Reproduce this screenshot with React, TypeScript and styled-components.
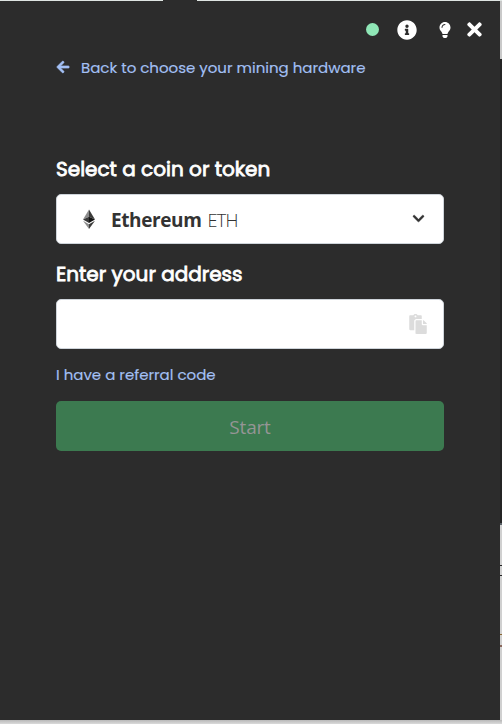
import React from "react";
import styled, { createGlobalStyle } from "styled-components";
import {
  FaArrowLeft,
  FaInfoCircle,
  FaLightbulb,
  FaTimes,
  FaChevronDown,
  FaPaste,
} from "react-icons/fa";

const GlobalStyle = createGlobalStyle`
  * { box-sizing: border-box; }
  body { margin: 0; overflow: hidden; background: #d4d4d4; }
`;

const Desktop = styled.div`
  display: grid;
  grid-template-columns: 500px 2px;
  grid-template-rows: 1px 719px 4px;
  width: 502px;
  height: 724px;
  overflow: hidden;
`;

const TopEdge = styled.div`
  grid-column: 1 / 3;
  background: linear-gradient(90deg, #dfe5e2 163px, #2c2c2c 163px 197px, #dfe5e2 197px);
`;

const SideEdge = styled.div`
  display: flex;
  flex-direction: column;
`;

const Strip = styled.div<{ $h: number; $color: string }>`
  flex: none;
  height: ${(p) => p.$h}px;
  background: ${(p) => p.$color};
`;

const BottomEdge = styled.div`
  grid-column: 1 / 3;
  background: linear-gradient(#b8b8b8, #dadada);
`;

const Window = styled.main`
  display: flex;
  flex-direction: column;
  padding: 0 56px;
  background: #2c2c2c;
  color: #fff;
  font-family: Poppins, Inter, sans-serif;
`;

const Toolbar = styled.header`
  display: flex;
  justify-content: flex-end;
  align-items: center;
  height: 56px;
  padding-top: 1px;
  margin-right: -38px;
`;

const StatusDot = styled.span`
  width: 13px;
  height: 13px;
  border-radius: 50%;
  background: #8fe6b6;
  margin-right: 18px;
`;

const ToolButton = styled.button<{ $size: number; $w: number; $gap: number }>`
  display: flex;
  justify-content: center;
  width: ${(p) => p.$w}px;
  margin: 0 ${(p) => p.$gap}px 0 0;
  padding: 0;
  border: 0;
  background: none;
  color: #fff;
  font-size: ${(p) => p.$size}px;
  svg { flex: none; }
`;

const TextLink = styled.a`
  display: flex;
  align-items: center;
  align-self: flex-start;
  height: 20px;
  gap: 11px;
  color: #a3c0f5;
  font-size: 15px;
  -webkit-text-stroke: 0.15px #a3c0f5;
  white-space: nowrap;
  svg { stroke: currentColor; stroke-width: 22px; overflow: visible; }
`;

const Form = styled.form`
  display: flex;
  flex-direction: column;
  margin-top: 79px;
`;

const Label = styled.label`
  height: 38px;
  font-size: 20px;
  font-weight: 400;
  -webkit-text-stroke: 0.8px #fff;
  line-height: 26px;
  white-space: nowrap;
`;

const Field = styled.div`
  display: flex;
  align-items: center;
  height: 50px;
  margin-bottom: 17px;
  padding: 0 15px 0 26px;
  border: 1px solid #ced4da;
  border-radius: 5px;
  background: #fff;
  color: #333;
  font: 19px "Segoe UI", "Open Sans", sans-serif;
`;

const CoinName = styled.strong`
  margin: 2px 0 0 16px;
  font-weight: 700;
  letter-spacing: -0.4px;
`;

const Ticker = styled.span`
  margin: 2px 0 0 6px;
  font-size: 18px;
  font-weight: 300;
  letter-spacing: -0.6px;
`;

const Trailing = styled.span<{ $size: number; $color: string; $right: number }>`
  display: flex;
  margin: 0 ${(p) => p.$right}px 0 auto;
  color: ${(p) => p.$color};
  font-size: ${(p) => p.$size}px;
`;

const CaretIcon = styled(FaChevronDown)`
  margin-bottom: 2px;
  stroke: currentColor;
  stroke-width: 16px;
`;

const ReferralLink = styled(TextLink)`
  margin-top: -2px;
`;

const Start = styled.button`
  height: 50px;
  margin-top: 17px;
  padding: 2px 0 0;
  border: 0;
  border-radius: 5px;
  background: #3c7a50;
  color: #959595;
  font: 19px "Segoe UI", "Open Sans", sans-serif;
  letter-spacing: -0.2px;
`;

const EthereumLogo = () => (
  <svg width="12" height="20" viewBox="0 0 12 20">
    <path d="M6 0.6 0 10.5l6-2.8z" fill="#8c8c8c" />
    <path d="M6 0.6v7.1l6 2.8z" fill="#3c3c3b" />
    <path d="M0 10.5l6-2.8v6.3z" fill="#383838" />
    <path d="M12 10.5 6 7.7V14z" fill="#141414" />
    <path d="M0 11.8 6 20v-4.7z" fill="#8c8c8c" />
    <path d="M12 11.8 6 20v-4.7z" fill="#3c3c3b" />
  </svg>
);

export default function App() {
  return (
    <>
      <GlobalStyle />
      <Desktop>
        <TopEdge />
        <Window>
          <Toolbar>
            <StatusDot />
            <ToolButton $size={20} $w={20} $gap={22} aria-label="Info"><FaInfoCircle /></ToolButton>
            <ToolButton $size={16} $w={11} $gap={17} aria-label="Tips"><FaLightbulb /></ToolButton>
            <ToolButton $size={21} $w={15} $gap={0} aria-label="Close"><FaTimes /></ToolButton>
          </Toolbar>
          <TextLink>
            <FaArrowLeft size={14} />
            <span>Back to choose your mining hardware</span>
          </TextLink>
          <Form>
            <Label>Select a coin or token</Label>
            <Field>
              <EthereumLogo />
              <CoinName>Ethereum</CoinName>
              <Ticker>ETH</Ticker>
              <Trailing $size={13} $color="#333" $right={3}><CaretIcon /></Trailing>
            </Field>
            <Label>Enter your address</Label>
            <Field>
              <Trailing $size={20} $color="#dcdcdc" $right={0}><FaPaste /></Trailing>
            </Field>
            <ReferralLink>I have a referral code</ReferralLink>
            <Start type="button">Start</Start>
          </Form>
        </Window>
        <SideEdge>
          <Strip $h={58} $color="#c9c9c9" />
          <Strip $h={464} $color="#242424" />
          <Strip $h={2} $color="#596066" />
          <Strip $h={40} $color="#d0d0d0" />
          <Strip $h={1} $color="#252525" />
          <Strip $h={9} $color="#d0d0d0" />
          <Strip $h={1} $color="#252525" />
          <Strip $h={58} $color="#d0d0d0" />
          <Strip $h={1} $color="#8a6630" />
          <Strip $h={10} $color="#d0d0d0" />
          <Strip $h={2} $color="#8a685c" />
          <Strip $h={73} $color="#d0d0d0" />
        </SideEdge>
        <BottomEdge />
      </Desktop>
    </>
  );
}
